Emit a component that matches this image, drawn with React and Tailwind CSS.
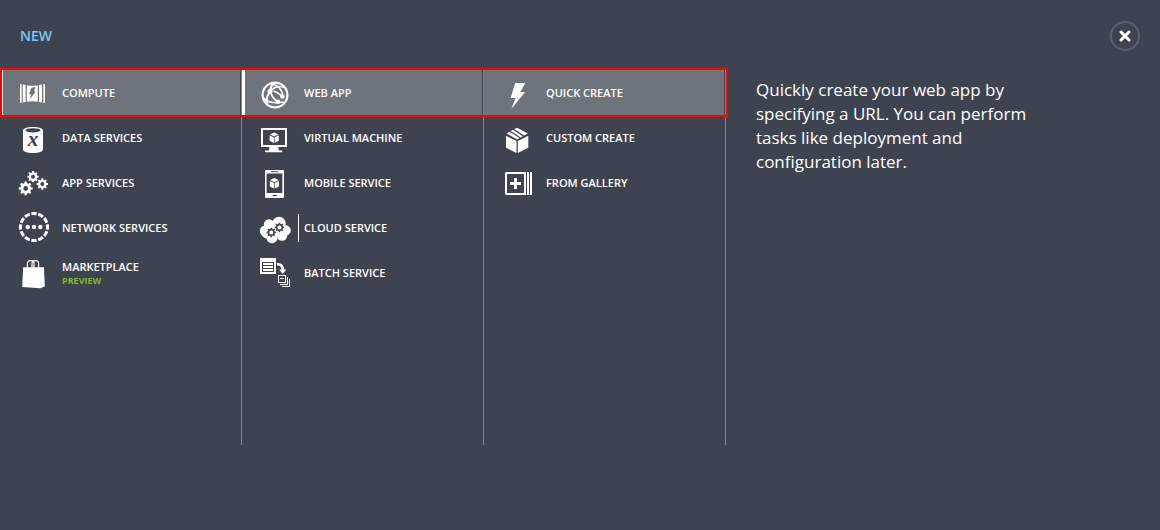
import React from "react";

const BG = "#3e444f";

function gearPath(cx, cy, outer, inner, teeth) {
  const pts = [];
  const step = (Math.PI * 2) / teeth;
  for (let i = 0; i < teeth; i++) {
    const a = i * step - Math.PI / 2;
    [
      [-0.3, inner],
      [-0.2, outer],
      [0.2, outer],
      [0.3, inner],
    ].forEach(([f, r]) => {
      pts.push(`${(cx + Math.cos(a + f * step) * r).toFixed(2)} ${(cy + Math.sin(a + f * step) * r).toFixed(2)}`);
    });
  }
  return `M${pts.join("L")}Z`;
}

function Gear({ cx, cy, r, hole, fill = "#fff", holeFill = BG }) {
  return (
    <>
      <path d={gearPath(cx, cy, r, r * 0.76, 8)} fill={fill} />
      <circle cx={cx} cy={cy} r={hole} fill={holeFill} />
    </>
  );
}

function MiniCube({ x, y }) {
  return (
    <g transform={`translate(${x} ${y})`} fill="#fff">
      <path d="M0-5.4L4.2-3.4L0-1.2L-4.2-3.4Z" />
      <path d="M-4.6-2.6L-.3-.4V5.2L-4.6 3Z" />
      <path d="M4.6-2.6L.4-.4V5.2L4.6 3Z" />
    </g>
  );
}

function Icon({ children }) {
  return (
    <svg viewBox="0 0 32 35" className="h-[35px] w-8 shrink-0 overflow-visible" fill="#fff" aria-hidden="true">
      {children}
    </svg>
  );
}

const icons = {
  compute: (
    <Icon>
      <path d="M2 9L3.7 9.2V27.8L2 28ZM4.8 9.5L7.6 9.9V27.1L4.8 27.5ZM25.3 9.2L27 9V28L25.3 27.8ZM21 9.9L24 9.5V27.5L21 27.1Z" />
      <path d="M8.8 10.3Q14.3 11.4 19.8 10.3V26.7Q14.3 25.6 8.8 26.7Z" />
      <path d="M13.4 12.8L17.6 12L15.9 16.6H17.8L11.6 24.6L13.2 19.2H11Z" fill="#6d747c" />
    </Icon>
  ),
  data: (
    <Icon>
      <path d="M5 10.5C5 8.4 9.4 7 15 7S25 8.4 25 10.5V29.5C25 31.6 20.6 33 15 33S5 31.6 5 29.5Z" />
      <ellipse cx="15" cy="10.3" rx="7.6" ry="2.1" fill={BG} />
      <text x="15" y="26" textAnchor="middle" fontFamily="Liberation Serif, serif" fontStyle="italic" fontWeight="700" fontSize="21" fill={BG}>
        x
      </text>
    </Icon>
  ),
  app: (
    <Icon>
      <Gear cx={15} cy={11.7} r={5.7} hole={2} />
      <Gear cx={7.7} cy={23.4} r={7} hole={2.3} />
      <Gear cx={24.3} cy={19} r={5.7} hole={2} />
    </Icon>
  ),
  network: (
    <Icon>
      <circle cx="16" cy="17" r="13.5" fill="none" stroke="#fff" strokeWidth="3" pathLength="120" strokeDasharray="7.6 2.4" strokeDashoffset="3.8" />
      <circle cx="9.7" cy="17" r="2.2" />
      <circle cx="16" cy="17" r="2.2" />
      <circle cx="22.3" cy="17" r="2.2" />
    </Icon>
  ),
  market: (
    <Icon>
      <path d="M5.2 12.2H26L26.8 31.6L22.4 33.2L4.2 32Z" />
      <path d="M9.4 13V8.6C9.4 4.6 16 4.6 16 8.6V13M14 13V8.6C14 4.6 20.6 4.6 20.6 8.6V13" fill="none" stroke="#fff" strokeWidth="1.2" />
    </Icon>
  ),
  web: (
    <Icon>
      <circle cx="15" cy="20" r="12.4" fill="none" stroke="#fff" strokeWidth="2.2" />
      <g fill="none" stroke="#fff" strokeWidth="1.6">
        <path d="M10.4 16.6C13.4 12.4 18 10.6 24 12" />
        <path d="M10.4 16.6C10.4 13 11.4 10.4 13.4 8" strokeWidth="2" />
        <path d="M12.4 9.2C17.6 9.8 22.4 14.4 23 21.4" />
        <path d="M10.4 16.6C7 20 6 24.6 7.4 29.4" strokeWidth="2" />
        <path d="M10.4 16.6C11.6 21.4 14 24.4 17.6 26.6" strokeWidth="1.8" />
        <path d="M13.6 16C17 17 19.6 18.8 22.6 21.6" strokeWidth="1.8" />
        <path d="M3.2 22.6C8 28 14 28.8 23.6 27" />
      </g>
      <circle cx="10" cy="16.4" r="2.5" />
      <circle cx="22.4" cy="21.6" r="2.3" />
      <circle cx="18" cy="26.8" r="2.2" />
    </Icon>
  ),
  vm: (
    <Icon>
      <path fillRule="evenodd" d="M1 8H27V27H1ZM3 10V25H25V10Z" />
      <path d="M9.4 27H18.4L18.8 30.4H22.2V32.2H5V30.4H9Z" />
      <MiniCube x={14.2} y={17.8} />
    </Icon>
  ),
  mobile: (
    <Icon>
      <path fillRule="evenodd" d="M6 5H23Q24 5 24 6V32Q24 33 23 33H6Q5 33 5 32V6Q5 5 6 5ZM6.6 8.4V28H22.4V8.4Z" />
      <path d="M11 6.2H18.4V7.2H11ZM12.6 30H17V31H12.6Z" fill={BG} />
      <MiniCube x={14.4} y={18.4} />
    </Icon>
  ),
  cloud: (
    <Icon>
      <circle cx="5.4" cy="21" r="5.6" />
      <circle cx="9" cy="14.4" r="5.2" />
      <circle cx="19" cy="13.4" r="6.7" />
      <circle cx="25.6" cy="20.4" r="5.2" />
      <circle cx="22" cy="25.6" r="5.2" />
      <circle cx="12" cy="27.6" r="5.6" />
      <circle cx="6.4" cy="24" r="4.4" />
      <path d="M6 14H24V27H6Z" />
      <Gear cx={11.3} cy={22.4} r={4.8} hole={2} fill={BG} holeFill="#fff" />
      <Gear cx={19.4} cy={17.4} r={4.8} hole={2} fill={BG} holeFill="#fff" />
    </Icon>
  ),
  batch: (
    <Icon>
      <path d="M0 3H16V19H0Z" />
      <path d="M2 7H14V8H2ZM2 10H14V11H2ZM2 13H14V14H2ZM2 16H14V17H2ZM2 7H3V17H2ZM13 7H14V17H13Z" fill={BG} />
      <path d="M17 9.4C20.6 8.8 23 11 22.8 15" fill="none" stroke="#fff" strokeWidth="2.6" />
      <path d="M19.2 14.4H26.2L22.7 19Z" />
      <path fillRule="evenodd" d="M18 20H26V28H18ZM19 21V27H25V21Z" />
      <path d="M20 23H24V24H20Z" />
      <path d="M27 22H28V30H20V29H27ZM29 24H30V32H22V31H29Z" />
    </Icon>
  ),
  quick: (
    <Icon>
      <path d="M13.2 8H23.2L18.4 17H23.2L9.4 33.8L13.6 23H8.6Z" />
    </Icon>
  ),
  custom: (
    <Icon>
      <path d="M4 15.8L14.5 21V33L4 27.8Z" />
      <path d="M26.3 15.8L15.8 21V33L26.3 27.8Z" />
      <path d="M12.2 9L15.2 7.7L25.8 13.4L22 15.6Z" />
      <path d="M11 9.8L20.8 16.2L18.8 17.4L8.6 10.9Z" />
      <path d="M7.4 11.7L17.6 18.1L15.2 19.4L4.6 13.6Z" />
    </Icon>
  ),
  gallery: (
    <Icon>
      <path fillRule="evenodd" d="M4 7H24V30H4L3 29V8ZM5 9V28H22V9Z" />
      <path d="M25 7H27V30H25ZM28 7H30V30H28Z" />
      <path d="M12 13H15V17H19V20H15V24H12V20H8V17H12Z" />
    </Icon>
  ),
};

const columns = [
  {
    name: "Category",
    items: [
      { label: "COMPUTE", icon: "compute", selected: true, marker: true },
      { label: "DATA SERVICES", icon: "data" },
      { label: "APP SERVICES", icon: "app" },
      { label: "NETWORK SERVICES", icon: "network" },
      { label: "MARKETPLACE", icon: "market", note: "PREVIEW" },
    ],
  },
  {
    name: "Service",
    items: [
      { label: "WEB APP", icon: "web", selected: true, marker: true },
      { label: "VIRTUAL MACHINE", icon: "vm" },
      { label: "MOBILE SERVICE", icon: "mobile" },
      { label: "CLOUD SERVICE", icon: "cloud", divider: true },
      { label: "BATCH SERVICE", icon: "batch" },
    ],
  },
  {
    name: "Method",
    items: [
      { label: "QUICK CREATE", icon: "quick", selected: true },
      { label: "CUSTOM CREATE", icon: "custom" },
      { label: "FROM GALLERY", icon: "gallery" },
    ],
  },
];

function MenuItem({ item }) {
  const fill = item.selected ? "bg-[#6d747c]" : "";
  const edge = item.marker ? "border-white" : "border-transparent";
  return (
    <li className="pr-px">
      <button
        type="button"
        aria-pressed={!!item.selected}
        className={`relative flex h-[45px] w-full items-center gap-3 border-l-3 pl-[15px] text-left ${fill} ${edge}`}
      >
        {icons[item.icon]}
        {item.divider && <span className="absolute top-[9px] left-[53px] h-7 w-px bg-white" />}
        <span className="flex flex-col">
          <span className="text-[11px] leading-4 font-semibold">{item.label}</span>
          {item.note && <span className="text-[9px] leading-3 font-bold text-[#7fba2c]">{item.note}</span>}
        </span>
      </button>
    </li>
  );
}

export default function App() {
  return (
    <main className="min-h-screen bg-[#3e444f] font-['Open_Sans','Noto_Sans',sans-serif] text-white">
      <header className="flex h-[70px] items-center justify-between px-5 pt-0.5">
        <h1 className="text-sm font-semibold text-[#79c9f2]">NEW</h1>
        <button
          type="button"
          aria-label="Close"
          className="flex size-[30px] items-center justify-center rounded-full border-2 border-[#5c626d]"
        >
          <svg viewBox="0 0 12 12" className="size-3" aria-hidden="true">
            <path d="M2 2L10 10M10 2L2 10" stroke="#fff" strokeWidth="3" strokeLinecap="round" />
          </svg>
        </button>
      </header>
      <div className="flex items-start">
        <nav aria-label="New resource" className="relative flex shrink-0">
          {columns.map((column) => (
            <ul key={column.name} aria-label={column.name} className="min-h-[375px] w-[242px] border-r border-[#7f858e]">
              {column.items.map((item) => (
                <MenuItem key={item.label} item={item} />
              ))}
            </ul>
          ))}
          <span className="pointer-events-none absolute -top-0.5 -right-0.5 left-0 h-[49px] border-2 border-[#ff0000]" />
        </nav>
        <p className="ml-[30px] max-w-[275px] pt-2 text-[17px] leading-6">
          Quickly create your web app by specifying a URL. You can perform tasks like deployment and configuration later.
        </p>
      </div>
    </main>
  );
}
